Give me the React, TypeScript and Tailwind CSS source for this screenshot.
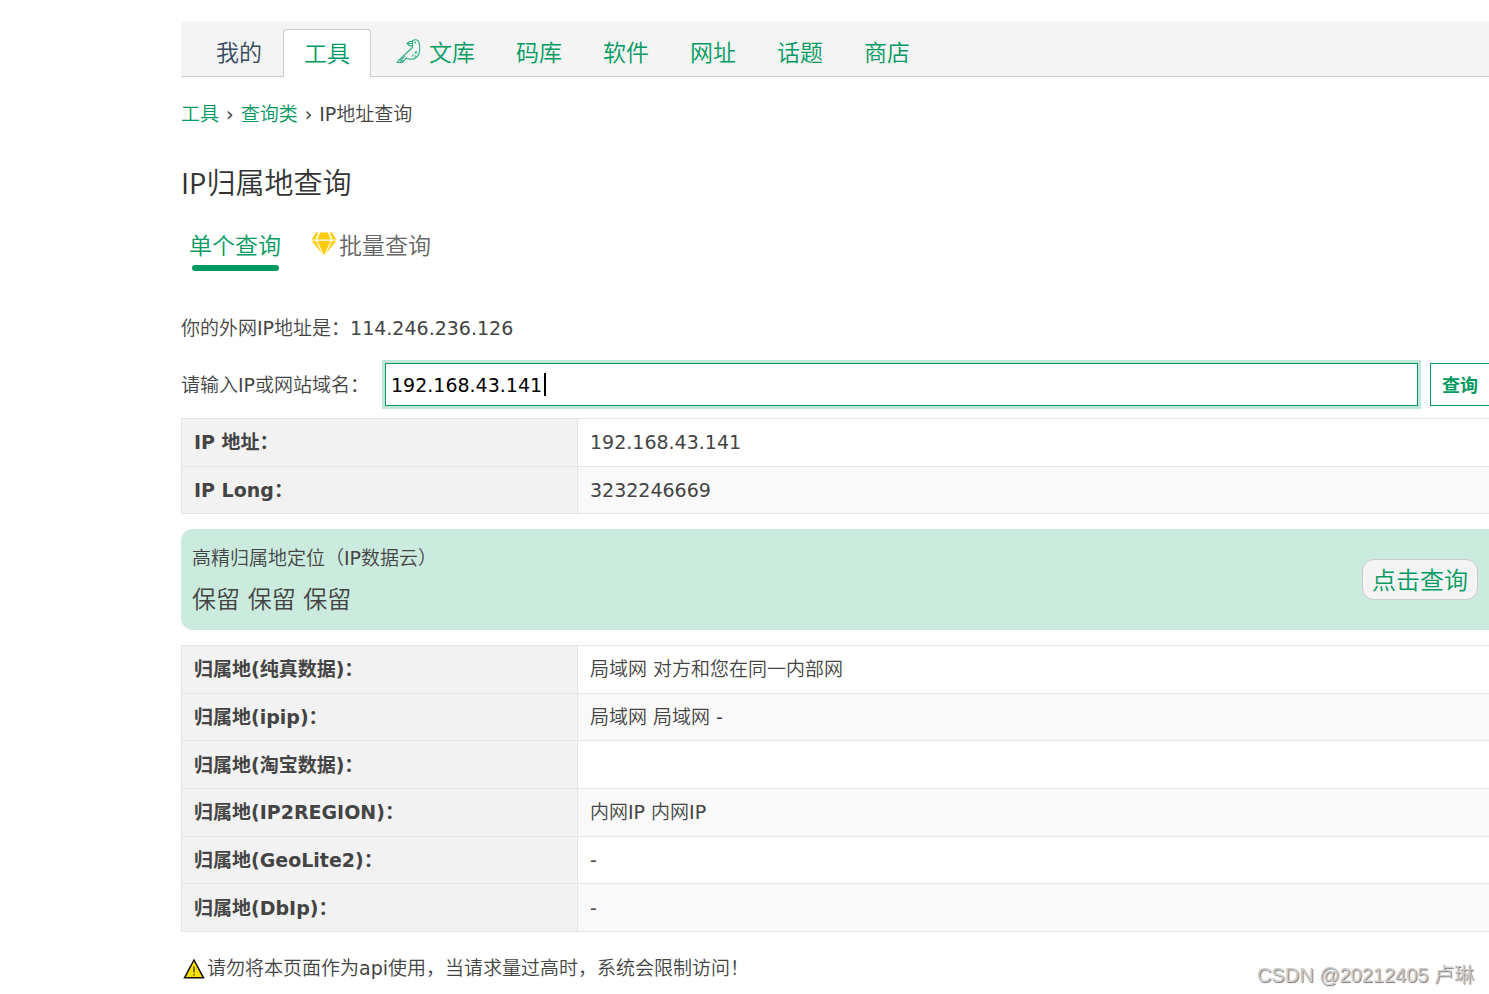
import { useState } from "react";

const navItems = ["码库", "软件", "网址", "话题", "商店"];

const ipRows = [
  ["IP 地址：", "192.168.43.141"],
  ["IP Long：", "3232246669"],
];

const regionRows = [
  ["归属地(纯真数据)：", "局域网 对方和您在同一内部网"],
  ["归属地(ipip)：", "局域网 局域网 -"],
  ["归属地(淘宝数据)：", ""],
  ["归属地(IP2REGION)：", "内网IP 内网IP"],
  ["归属地(GeoLite2)：", "-"],
  ["归属地(DbIp)：", "-"],
];

const BirdIcon = () => (
  <svg
    viewBox="0 0 25 26"
    className="ml-1 mr-2 h-[26px] w-[25px]"
    fill="none"
    stroke="#2fae80"
    strokeWidth="1.1"
    strokeLinecap="round"
    strokeLinejoin="round"
  >
    <path d="M16 4C16.500 1.200 22 .8 22.800 4C23.800 7.500 24 12 23 15.500C21.500 20.500 16 22.500 11 20.500" />
    <path d="M16.500 4V9.500L3 22" />
    <path d="M16 3.500H13.500L11 5.500H16.500M11.500 5.500C12 7.300 14 8 16.300 7.800" />
    <path d="M3 22L1 24.500H3.500L8.500 18.500M3.500 24.500H6L10.500 20M4 21.500L7 23.500" />
    <circle cx="19" cy="4.500" r="0.400" />
    <path d="M20 13.500L19 15H20.500ZM17 17L16.500 18M18.500 18H19.500" />
  </svg>
);

const DiamondIcon = () => (
  <svg viewBox="0 0 26 24" className="h-6 w-[26px]" fill="#ffcc11">
    <path d="M5 .5H7.500L4.500 7.500H.5Z" />
    <path d="M9 .5H17L20 7.500H6Z" />
    <path d="M18.500 .5H21L25.500 7.500H21.500Z" />
    <path d="M.5 8.800H4.800L11 21.500Z" />
    <path d="M6.200 8.800H19.800L13 23.500Z" />
    <path d="M21.200 8.800H25.500L15 21.500Z" />
    <path d="M8.500 .5L5.500 8M17.500 .5L20.500 8" fill="none" stroke="#fff" strokeWidth="1" />
  </svg>
);

const WarningIcon = () => (
  <svg viewBox="0 0 22 21" className="h-[21px] w-[22px]">
    <path d="M11 2L20.500 19.800H1.500Z" fill="#ffe100" stroke="#111" strokeWidth="1.500" />
    <path d="M11 8.500V14.500M11 16V17.500" stroke="#222" strokeWidth="1.200" />
  </svg>
);

const InfoTable = ({ rows, height }: { rows: string[][]; height: string }) => (
  <table className={`w-full table-fixed border-collapse border border-r-0 border-[#e5e5e5] ${height}`}>
    <tbody>
      {rows.map(([label, value]) => (
        <tr key={label} className="border-b border-[#e5e5e5] even:bg-[#f9f9f9]">
          <th
            scope="row"
            className="w-[396px] border-r border-[#e5e5e5] bg-[#f2f2f2] px-3 text-left font-['DejaVu_Sans','Noto_Sans_CJK_SC',sans-serif] font-bold"
          >
            {label}
          </th>
          <td className="px-3">{value}</td>
        </tr>
      ))}
    </tbody>
  </table>
);

const App = () => {
  const [query, setQuery] = useState("192.168.43.141");

  return (
    <div className="relative overflow-hidden bg-white pt-[21px] pb-2 pl-[181px] font-['DejaVu_Sans','Noto_Sans_CJK_SC_DemiLight','Noto_Sans_CJK_SC',sans-serif] text-[19px] leading-7 text-[#444]">
      <nav className="flex h-14 items-end gap-px border-b border-[#ccc] bg-[#f4f4f4] pl-[15px] font-['Noto_Sans_CJK_SC_DemiLight','Noto_Sans_CJK_SC',sans-serif] text-[23px] text-[#009a61]">
        <a href="#mine" className="flex h-[47px] items-center px-5 pb-[3px] text-[#34495e]">
          我的
        </a>
        <a
          href="#tools"
          className="-mb-px flex h-12 items-center rounded-t border border-b-0 border-[#ccc] bg-white px-5 pb-[3px]"
        >
          工具
        </a>
        <a href="#docs" className="flex h-[47px] items-center px-5 pb-[3px]">
          <BirdIcon />
          文库
        </a>
        {navItems.map((item) => (
          <a key={item} href={`#${item}`} className="flex h-[47px] items-center px-5 pb-[3px]">
            {item}
          </a>
        ))}
      </nav>

      <div className="mt-[23px] flex gap-[7px]">
        <a href="#tools" className="text-[#009a61]">工具</a>
        <span>›</span>
        <a href="#query" className="text-[#009a61]">查询类</a>
        <span>›</span>
        <span>IP地址查询</span>
      </div>

      <h1 className="mt-[35px] font-['Open_Sans','Noto_Sans_CJK_SC_DemiLight','Noto_Sans_CJK_SC',sans-serif] text-[29px] leading-10 text-[#333]">
        IP归属地查询
      </h1>

      <div className="mt-[23px] flex gap-[30px] pl-2 font-['Noto_Sans_CJK_SC_DemiLight','Noto_Sans_CJK_SC',sans-serif] text-[23px] leading-9">
        <button className="text-[#009a61]">
          单个查询
          <span className="mx-auto mt-[3px] block h-[6px] w-[87px] rounded-full bg-[#009a61]" />
        </button>
        <button className="flex items-center gap-[2px] self-start text-[#666]">
          <DiamondIcon />
          批量查询
        </button>
      </div>

      <p className="mt-[43px]">你的外网IP地址是：114.246.236.126</p>

      <form className="mt-[21px] flex items-center" onSubmit={(e) => e.preventDefault()}>
        <label htmlFor="ip" className="w-[204px] shrink-0">
          请输入IP或网站域名：
        </label>
        <div className="relative grow">
          <input
            id="ip"
            value={query}
            onChange={(e) => setQuery(e.target.value)}
            className="block h-[43px] w-full border border-[#009a61] bg-white px-[5px] text-black ring-3 ring-[#bfe6d7] outline-none"
          />
          <span className="absolute top-[10px] left-[159px] h-[23px] w-[2px] bg-black" />
        </div>
        <button className="ml-3 h-[43px] border border-r-0 border-[#009a61] px-[11px] pb-[2px] font-['Noto_Sans_CJK_SC',sans-serif] text-lg font-bold text-[#009a61]">
          查询
        </button>
      </form>

      <div className="mt-3">
        <InfoTable rows={ipRows} height="h-[96px]" />
      </div>

      <section className="my-[15px] flex h-[101px] items-center justify-between rounded-l-xl bg-[#cbebde] px-[11px]">
        <div>
          <p>高精归属地定位（IP数据云）</p>
          <p className="mt-3 text-2xl">保留 保留 保留</p>
        </div>
        <button className="h-[41px] rounded-xl border border-[#ccc] bg-[#f4f4f4] px-[9px] pb-[2px] font-['Noto_Sans_CJK_SC_DemiLight','Noto_Sans_CJK_SC',sans-serif] text-2xl text-[#009a61]">
          点击查询
        </button>
      </section>

      <InfoTable rows={regionRows} height="h-[287px]" />

      <p className="mt-[22px] flex items-center gap-[2px] pl-[2px]">
        <WarningIcon />
        请勿将本页面作为api使用，当请求量过高时，系统会限制访问！
      </p>

      <div className="absolute right-[15px] bottom-[5px] font-['Liberation_Sans','Noto_Sans_CJK_SC_DemiLight','Noto_Sans_CJK_SC',sans-serif] text-[20px] leading-5 text-[#ccc] [text-shadow:1px_1px_1px_#777]">
        CSDN @20212405 卢琳
      </div>
    </div>
  );
};

export default App;
